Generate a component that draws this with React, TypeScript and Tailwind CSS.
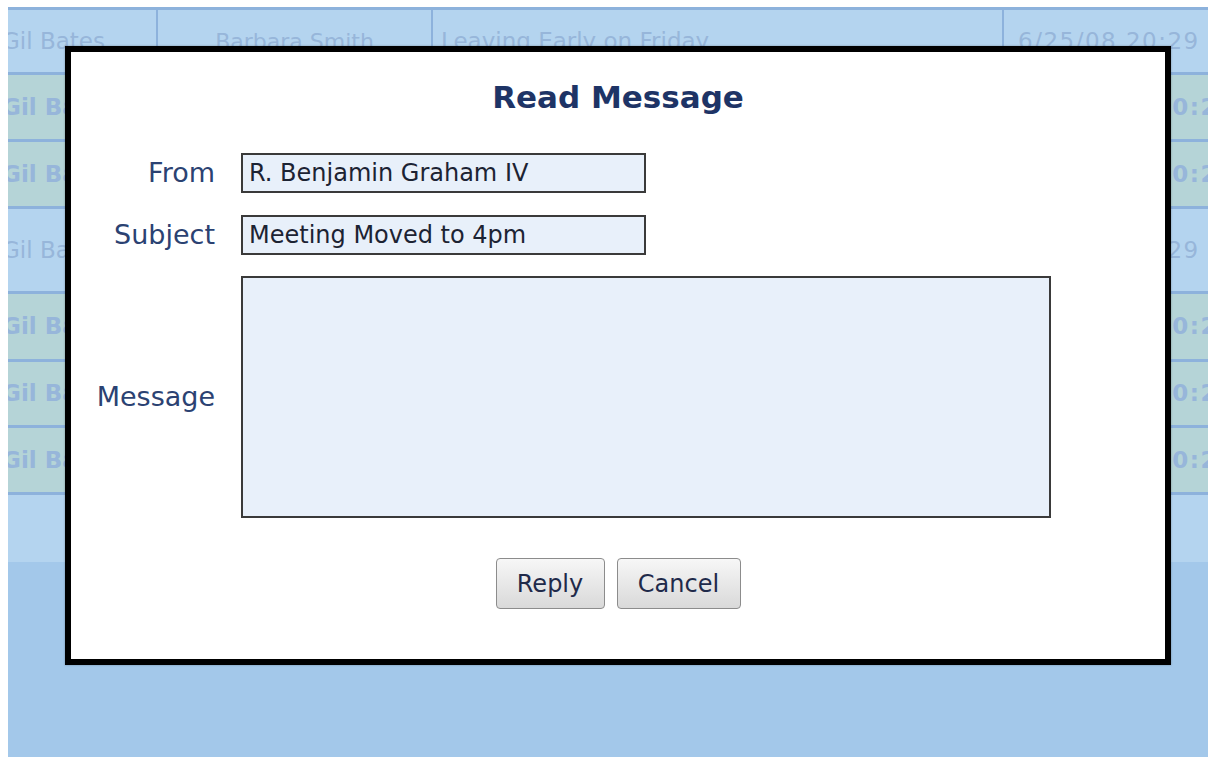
const rows = [
  { h: "h-[65px]", bg: "bg-[#b4d4ef]", bold: false, grid: true },
  { h: "h-[67px]", bg: "bg-[#b5d4d7]", bold: true, grid: false },
  { h: "h-[67px]", bg: "bg-[#b5d4d7]", bold: true, grid: false },
  { h: "h-[85px]", bg: "bg-[#b4d4ef]", bold: false, grid: false },
  { h: "h-[68px]", bg: "bg-[#b5d4d7]", bold: true, grid: false },
  { h: "h-[66px]", bg: "bg-[#b5d4d7]", bold: true, grid: false },
  { h: "h-[67px]", bg: "bg-[#b5d4d7]", bold: true, grid: false },
];

function InboxRow({ h, bg, bold, grid }: (typeof rows)[number]) {
  const cell = grid ? "border-r-2 border-[#8db2dc]" : "";
  return (
    <div
      className={`flex ${h} ${bg} items-center border-b-[3px] border-[#8db2dc] text-[23px] text-[#97b6da] ${
        bold ? "font-bold" : ""
      }`}
    >
      <div className={`flex h-full w-[150px] shrink-0 items-center ${cell}`}>
        <span className="-ml-[6px] whitespace-nowrap">Gil Bates</span>
      </div>
      <div className={`flex h-full w-[275px] shrink-0 items-center justify-center ${cell}`}>
        <span className="whitespace-nowrap text-[22px]">Barbara Smith</span>
      </div>
      <div className={`flex h-full w-[571px] shrink-0 items-center pl-[8px] ${cell}`}>
        <span className="whitespace-nowrap">Leaving Early on Friday</span>
      </div>
      <div
        className={`flex h-full flex-1 items-center overflow-hidden ${
          bold ? "pl-[34px]" : "pl-[14px]"
        }`}
      >
        <span className="whitespace-nowrap tracking-[1.5px]">6/25/08 20:29</span>
      </div>
    </div>
  );
}

function Field({ label, value }: { label: string; value: string }) {
  return (
    <>
      <div className="text-right text-[27px] text-[#2b4272]">{label}</div>
      <div className="flex h-[40px] w-[405px] items-center border-2 border-[#3a3a3a] bg-[#e8f0fa] px-[6px] text-[24px] text-[#1c2333]">
        {value}
      </div>
    </>
  );
}

export default function App() {
  return (
    <div className="relative h-screen w-full overflow-hidden bg-white font-['DejaVu_Sans',Verdana,sans-serif]">
      {/* message list behind the dialog */}
      <div className="ml-[8px] mt-[7px] flex h-[750px] flex-col overflow-hidden border-t-[3px] border-[#8db2dc] bg-[#a3c8ea]">
        {rows.map((r, i) => (
          <InboxRow key={i} {...r} />
        ))}
        <div className="h-[67px] shrink-0 bg-[#b4d4ef]" />
      </div>

      {/* read message dialog */}
      <div className="absolute left-[65px] top-[46px] flex h-[619px] w-[1106px] flex-col items-center border-[6px] border-black bg-white shadow-[0_0_2px_rgba(0,0,0,0.3)]">
        <h1 className="mt-[27px] text-[31px] leading-[36px] font-bold text-[#1e3466]">
          Read Message
        </h1>

        <div className="mt-[38px] grid w-full grid-cols-[144px_1fr] items-center gap-x-[26px] gap-y-[21px]">
          <Field label="From" value="R. Benjamin Graham IV" />
          <Field label="Subject" value="Meeting Moved to 4pm" />
          <div className="text-right text-[27px] text-[#2b4272]">Message</div>
          <div className="h-[242px] w-[810px] border-2 border-[#3a3a3a] bg-[#e8f0fa]" />
        </div>

        <div className="mt-[40px] flex gap-[12px]">
          <button className="h-[51px] w-[109px] rounded-[4px] border border-[#8c8c8c] bg-gradient-to-b from-[#f7f7f7] to-[#d9d9d9] text-[24px] text-[#1f2a4a]">
            Reply
          </button>
          <button className="h-[51px] w-[124px] rounded-[4px] border border-[#8c8c8c] bg-gradient-to-b from-[#f7f7f7] to-[#d9d9d9] text-[24px] text-[#1f2a4a]">
            Cancel
          </button>
        </div>
      </div>
    </div>
  );
}
